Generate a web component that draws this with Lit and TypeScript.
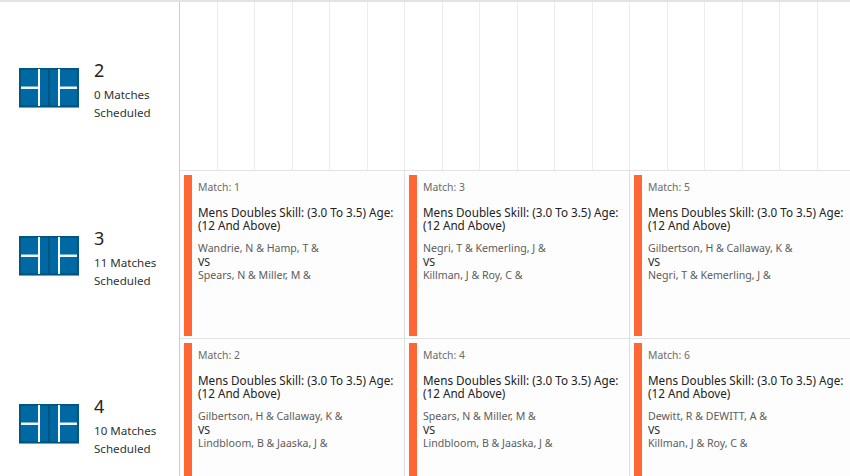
import { LitElement, html, css, svg } from 'lit';
import { customElement } from 'lit/decorators.js';

interface Match {
  no: number;
  home: string;
  away: string;
}

interface Court {
  id: number;
  scheduled: number;
  matches: Match[];
}

const COURTS: Court[] = [
  { id: 2, scheduled: 0, matches: [] },
  {
    id: 3,
    scheduled: 11,
    matches: [
      { no: 1, home: 'Wandrie, N & Hamp, T &', away: 'Spears, N & Miller, M &' },
      { no: 3, home: 'Negri, T & Kemerling, J &', away: 'Killman, J & Roy, C &' },
      { no: 5, home: 'Gilbertson, H & Callaway, K &', away: 'Negri, T & Kemerling, J &' },
    ],
  },
  {
    id: 4,
    scheduled: 10,
    matches: [
      { no: 2, home: 'Gilbertson, H & Callaway, K &', away: 'Lindbloom, B & Jaaska, J &' },
      { no: 4, home: 'Spears, N & Miller, M &', away: 'Lindbloom, B & Jaaska, J &' },
      { no: 6, home: 'Dewitt, R & DEWITT, A &', away: 'Killman, J & Roy, C &' },
    ],
  },
];

const SLOTS = Array.from({ length: 18 });

const courtIcon = svg`
  <rect x="0" y="39" width="60" height="1" fill="#6da3bd"></rect>
  <rect x="0" y="0" width="60" height="39" fill="#00567e"></rect>
  <rect x="2" y="2" width="56" height="35" fill="#0069a3"></rect>
  <rect x="29" y="2" width="2" height="35" fill="#00567e"></rect>
  <rect x="19" y="1" width="2" height="37" fill="#fff"></rect>
  <rect x="39" y="1" width="2" height="37" fill="#fff"></rect>
  <rect x="2" y="18" width="17" height="1" fill="#6fb0d2"></rect>
  <rect x="2" y="19" width="17" height="2" fill="#eef6fa"></rect>
  <rect x="41" y="18" width="17" height="1" fill="#6fb0d2"></rect>
  <rect x="41" y="19" width="17" height="2" fill="#eef6fa"></rect>
`;

@customElement('app-root')
export class AppRoot extends LitElement {
  static styles = css`
    :host {
      display: block;
      width: 850px;
      height: 476px;
      overflow: hidden;
      background: #fff;
      color: #222;
      font-family: 'Noto Sans', 'Open Sans', sans-serif;
    }

    .board {
      border-top: 2px solid #e3e3e3;
    }

    .row {
      display: flex;
      height: 168px;
    }

    .court {
      flex: none;
      box-sizing: border-box;
      width: 180px;
      padding-left: 19px;
      border-right: 1px solid #ccc;
      display: flex;
      align-items: center;
      gap: 15px;
    }

    .court svg {
      flex: none;
      display: block;
      margin-top: 4px;
    }

    .court-info {
      padding-top: 8px;
    }

    .court-name {
      font-size: 18px;
      line-height: 24px;
      margin-bottom: 4px;
    }

    .court-count {
      font-size: 11.6px;
      line-height: 18px;
      color: #333;
      width: 70px;
    }

    .slots {
      flex: 1;
      display: flex;
      overflow: hidden;
    }

    .slot {
      flex: none;
      box-sizing: border-box;
      width: 37.5px;
      border-right: 1px solid #ececec;
    }

    .cards {
      flex: 1;
      display: flex;
      overflow: hidden;
      border-top: 1px solid #e3e3e3;
    }

    .card {
      flex: none;
      box-sizing: border-box;
      width: 225px;
      padding: 4px 4px 2px 4px;
      border-right: 1px solid #ddd;
      background: #fdfdfd;
      display: flex;
    }

    .bar {
      flex: none;
      width: 8px;
      background: #ff6633;
    }

    .body {
      padding: 5px 0 0 6px;
      min-width: 0;
    }

    .match-no {
      font-size: 10.4px;
      line-height: 14px;
      color: #6b6b6b;
    }

    .title {
      margin-top: 12px;
      font-size: 11.7px;
      line-height: 13px;
      width: 205px;
      color: #222;
    }

    .players {
      margin-top: 10px;
      font-size: 10.6px;
      line-height: 13.5px;
      color: #5c5c5c;
      white-space: nowrap;
    }

    .vs {
      color: #222;
    }
  `;

  private renderCard(m: Match) {
    return html`
      <div class="card">
        <div class="bar"></div>
        <div class="body">
          <div class="match-no">${`Match: ${m.no}`}</div>
          <div class="title">Mens Doubles Skill: (3.0 To 3.5) Age: (12 And Above)</div>
          <div class="players">
            <div>${m.home}</div>
            <div class="vs">VS</div>
            <div>${m.away}</div>
          </div>
        </div>
      </div>
    `;
  }

  render() {
    return html`
      <div class="board">
        ${COURTS.map((c) => html`
          <div class="row">
            <div class="court">
              <svg width="60" height="40" viewBox="0 0 60 40">${courtIcon}</svg>
              <div class="court-info">
                <div class="court-name">${c.id}</div>
                <div class="court-count">${`${c.scheduled} Matches Scheduled`}</div>
              </div>
            </div>
            ${c.matches.length
              ? html`<div class="cards">${c.matches.map((m) => this.renderCard(m))}</div>`
              : html`<div class="slots">${SLOTS.map(() => html`<div class="slot"></div>`)}</div>`}
          </div>
        `)}
      </div>
    `;
  }
}
